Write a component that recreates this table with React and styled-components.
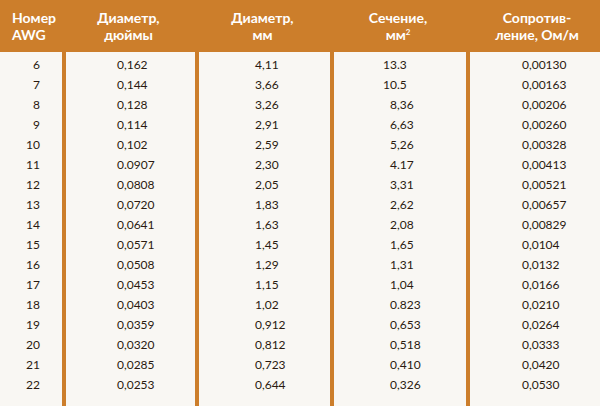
import React from 'react';
import styled, { createGlobalStyle } from 'styled-components';

const orange = '#cc7e2b';

const GlobalStyle = createGlobalStyle`
	html, body, #root {
		margin: 0;
		height: 100%;
	}
	body {
		background: #f9f7f3;
		font-family: Lato, 'Open Sans', sans-serif;
	}
`;

const Page = styled.div`
	display: flex;
	flex-direction: column;
	height: 100%;
`;

const Header = styled.div`
	display: grid;
	grid-template-columns: 62px 133px 135px 136px 134px;
	height: 52px;
	background: ${orange};
	color: #fff;
	font-weight: 700;
	font-size: 14px;
	line-height: 17px;
`;

const HeadCell = styled.div`
	padding-top: 9px;
	text-align: ${(props) => (props.left ? 'left' : 'center')};
	padding-left: ${(props) => props.pl || 0}px;
	sup {
		font-size: 8px;
		line-height: 0;
		vertical-align: 5px;
	}
`;

const Body = styled.div`
	flex: 1;
	display: grid;
	grid-template-columns: 62px 133px 135px 136px 134px;
	color: #2a1a10;
	font-size: 12px;
`;

const Column = styled.div`
	display: flex;
	flex-direction: column;
	padding-top: 3px;
	border-left: ${(props) => (props.first ? 'none' : `4px solid ${orange}`)};
	padding-left: ${(props) => props.pl || 0}px;
	padding-right: ${(props) => props.pr || 0}px;
	align-items: ${(props) => (props.right ? 'flex-end' : 'flex-start')};
`;

const Cell = styled.div`
	height: 20px;
	line-height: 20px;
	white-space: nowrap;
	display: flex;
`;

const IntPart = styled.span`
	display: inline-block;
	width: 14px;
	text-align: right;
`;

const rows = [
	['6', '0,162', '4,11', '13.3', '0,00130'],
	['7', '0,144', '3,66', '10.5', '0,00163'],
	['8', '0,128', '3,26', '8,36', '0,00206'],
	['9', '0,114', '2,91', '6,63', '0,00260'],
	['10', '0,102', '2,59', '5,26', '0,00328'],
	['11', '0.0907', '2,30', '4.17', '0,00413'],
	['12', '0,0808', '2,05', '3,31', '0,00521'],
	['13', '0,0720', '1,83', '2,62', '0,00657'],
	['14', '0,0641', '1,63', '2,08', '0,00829'],
	['15', '0,0571', '1,45', '1,65', '0,0104'],
	['16', '0,0508', '1,29', '1,31', '0,0132'],
	['17', '0,0453', '1,15', '1,04', '0,0166'],
	['18', '0,0403', '1,02', '0.823', '0,0210'],
	['19', '0,0359', '0,912', '0,653', '0,0264'],
	['20', '0,0320', '0,812', '0,518', '0,0333'],
	['21', '0,0285', '0,723', '0,410', '0,0420'],
	['22', '0,0253', '0,644', '0,326', '0,0530'],
];

const splitDecimal = (v) => {
	const m = v.match(/^(\d+)([.,]\d+)$/);
	return m ? [m[1], m[2]] : [v, ''];
};

export default function App() {
	return (
		<Page>
			<GlobalStyle />
			<Header>
				<HeadCell left pl={12}>
					Номер
					<br />
					AWG
				</HeadCell>
				<HeadCell>
					Диаметр,
					<br />
					дюймы
				</HeadCell>
				<HeadCell>
					Диаметр,
					<br />
					мм
				</HeadCell>
				<HeadCell>
					Сечение,
					<br />
					мм<sup>2</sup>
				</HeadCell>
				<HeadCell pl={8}>
					Сопротив-
					<br />
					ление, Ом/м
				</HeadCell>
			</Header>
			<Body>
				<Column first right pr={22}>
					{rows.map((r) => (
						<Cell key={r[0]}>{r[0]}</Cell>
					))}
				</Column>
				<Column pl={51}>
					{rows.map((r) => (
						<Cell key={r[0]}>{r[1]}</Cell>
					))}
				</Column>
				<Column pl={56}>
					{rows.map((r) => (
						<Cell key={r[0]}>{r[2]}</Cell>
					))}
				</Column>
				<Column pl={49}>
					{rows.map((r) => {
						const [i, f] = splitDecimal(r[3]);
						return (
							<Cell key={r[0]}>
								<IntPart>{i}</IntPart>
								<span>{f}</span>
							</Cell>
						);
					})}
				</Column>
				<Column pl={52}>
					{rows.map((r) => (
						<Cell key={r[0]}>{r[4]}</Cell>
					))}
				</Column>
			</Body>
		</Page>
	);
}
